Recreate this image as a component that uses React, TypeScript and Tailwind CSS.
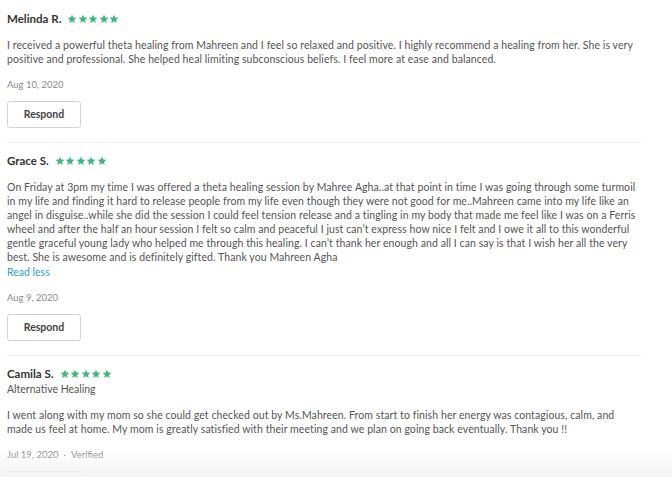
import React from "react";

type Review = {
  name: string;
  service?: string;
  text: string;
  readLess?: boolean;
  date: string;
  verified?: boolean;
};

const reviews: Review[] = [
  {
    name: "Melinda R.",
    text: "I received a powerful theta healing from Mahreen and I feel so relaxed and positive. I highly recommend a healing from her. She is very positive and professional. She helped heal limiting subconscious beliefs. I feel more at ease and balanced.",
    date: "Aug 10, 2020",
  },
  {
    name: "Grace S.",
    text: "On Friday at 3pm my time I was offered a theta healing session by Mahree Agha..at that point in time I was going through some turmoil in my life and finding it hard to release people from my life even though they were not good for me..Mahreen came into my life like an angel in disguise..while she did the session I could feel tension release and a tingling in my body that made me feel like I was on a Ferris wheel and after the half an hour session I felt so calm and peaceful I just can\u2019t express how nice I felt and I owe it all to this wonderful gentle graceful young lady who helped me through this healing. I can\u2019t thank her enough and all I can say is that I wish her all the very best. She is awesome and is definitely gifted. Thank you Mahreen Agha",
    readLess: true,
    date: "Aug 9, 2020",
  },
  {
    name: "Camila S.",
    service: "Alternative Healing",
    text: "I went along with my mom so she could get checked out by Ms.Mahreen. From start to finish her energy was contagious, calm, and made us feel at home. My mom is greatly satisfied with their meeting and we plan on going back eventually. Thank you !!",
    date: "Jul 19, 2020",
    verified: true,
  },
];

const Stars = () => (
  <div className="flex gap-[0.5px] text-[#3fb77e]">
    {[0, 1, 2, 3, 4].map((i) => (
      <svg key={i} width="10" height="10" viewBox="0 0 24 24" fill="currentColor">
        <path d="M12 1.5l3.1 6.9 7.4.7-5.6 5 1.7 7.4L12 17.6l-6.6 3.9 1.7-7.4-5.6-5 7.4-.7z" />
      </svg>
    ))}
  </div>
);

const App: React.FC = () => {
  return (
    <div
      className="relative h-[477px] w-[672px] overflow-hidden bg-white"
      style={{ fontFamily: "Lato, 'Open Sans', sans-serif" }}
    >
      <div className="w-[641px] pl-[7px] pt-[1px]">
        {reviews.map((r, i) => (
          <div
            key={r.name}
            className={`pt-[11px] pb-[14px] ${i < reviews.length - 1 ? "border-b border-[#efefef]" : ""}`}
          >
            <div className="flex items-center gap-[6px]">
              <span className="text-[11.5px] font-bold leading-[14px] text-[#333]">{r.name}</span>
              <Stars />
            </div>
            {r.service && (
              <div className="mt-[1px] text-[10.5px] leading-[14px] text-[#555]">{r.service}</div>
            )}
            <p className="mt-[12px] text-[10.5px] leading-[14px] tracking-[0.08px] text-[#555]">{r.text}</p>
            {r.readLess && (
              <div className="mt-[1px] text-[10.5px] leading-[14px] text-[#2b9cd8]">Read less</div>
            )}
            <div className="mt-[13px] flex items-center gap-[5px] text-[9.5px] leading-[12px] text-[#8a8a8a]">
              <span>{r.date}</span>
              {r.verified && (
                <>
                  <span>·</span>
                  <span>Verified</span>
                </>
              )}
            </div>
            <button className="mt-[10px] h-[27px] w-[74px] rounded-[3px] border border-[#d3d3d3] bg-white text-[10.5px] font-bold text-[#444]">
              Respond
            </button>
          </div>
        ))}
      </div>
      <div className="pointer-events-none absolute bottom-0 left-0 h-[26px] w-full bg-gradient-to-b from-white/0 to-[#f2f2f2]" />
    </div>
  );
};

export default App;
